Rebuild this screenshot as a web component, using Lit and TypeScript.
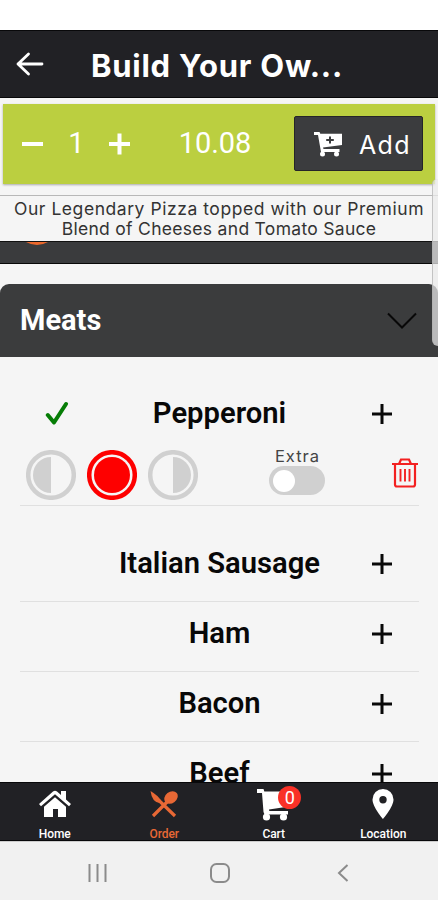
import { LitElement, html, css, svg } from "lit";
import { customElement, property } from "lit/decorators.js";

const cartShape = svg`
  <path d="M0 1h6.500l.8 2.500H32v15L12 21.500l.3 1.500H31v3.500H7.500L6.500 24 5 5H0z"/>
  <circle cx="9.500" cy="29" r="3.600"/><circle cx="26.500" cy="29" r="3.600"/>`;

const plus = html`<svg class="plus" width="22" height="22" viewBox="0 0 22 22">
  <path d="M11 1v20M1 11h20" fill="none" stroke="currentColor" stroke-width="3"/></svg>`;

@customElement("topping-row")
export class ToppingRow extends LitElement {
  @property() name = "";
  @property({ type: Boolean }) selected = false;

  static styles = css`
    :host { display: block; margin: 0 19px 0 20px; border-bottom: 1px solid #e0e0e0; box-sizing: border-box; height: 70px; }
    :host([selected]) { height: 149px; margin-bottom: 26px; padding-top: 25px; }
    .line { display: grid; grid-template-columns: 74px 1fr 74px; align-items: center; height: 63px; color: #080808; }
    .name { text-align: center; font: 600 29.200px/34px Roboto, sans-serif; white-space: nowrap; }
    svg { display: block; }
    .plus, .check { justify-self: center; }
    .plus { margin-top: 1px; }
    .options { display: flex; align-items: center; height: 60px; }
    .portion { margin: 0 5.500px; }
    .extra { margin: -8px 0 0 66px; width: 57px; text-align: center; font: 400 16.500px/20px Inter, sans-serif; color: #444; }
    .label { letter-spacing: 1px; }
    .toggle { width: 56px; height: 29px; border-radius: 15px; background: #d0d0d0; box-sizing: border-box; padding: 3.500px; }
    .knob { width: 22px; height: 22px; border-radius: 50%; background: #fff; }
    .trash { margin: -4px 1px 0 auto; }
  `;

  portion(kind: "left" | "whole" | "right") {
    const c = kind === "whole" ? "#fe0000" : "#d0d0d0";
    const fill = kind === "left" ? svg`<path d="M25 7a18 18 0 0 0 0 36z" fill=${c}/>`
      : kind === "right" ? svg`<path d="M25 7a18 18 0 0 1 0 36z" fill=${c}/>`
      : svg`<circle cx="25" cy="25" r="18" fill=${c}/>`;
    return html`<svg class="portion" width="50" height="50" viewBox="0 0 50 50">
      <circle cx="25" cy="25" r="22.800" fill="none" stroke=${c} stroke-width="4.500"/>${fill}</svg>`;
  }

  render() {
    return html`
      <div class="line">
        ${this.selected ? html`<svg class="check" width="24" height="25" viewBox="0 0 24 25">
          <path d="M2.800 14l6.200 7.500L21 3" fill="none" stroke="#067d06" stroke-width="4" stroke-linecap="round" stroke-linejoin="round"/></svg>` : html`<span></span>`}
        <div class="name">${this.name}</div>
        ${plus}
      </div>
      ${this.selected ? html`<div class="options">
        ${this.portion("left")}${this.portion("whole")}${this.portion("right")}
        <div class="extra"><div class="label">Extra</div><div class="toggle"><div class="knob"></div></div></div>
        <svg class="trash" width="26" height="30" viewBox="0 0 26 30" fill="none" stroke="#f32020" stroke-width="2.200">
          <path d="M0 6h26M7 6l2-4.500h8L19 6M3 6v20.500q0 2 2 2h16q2 0 2-2V6"/>
          <path d="M8.500 11v12.500M13 11v12.500M17.500 11v12.500" stroke-width="1.900"/></svg>
      </div>` : null}`;
  }
}

@customElement("app-root")
export class AppRoot extends LitElement {
  static styles = css`
    :host { display: flex; flex-direction: column; width: 438px; height: 900px; overflow: hidden; background: #f5f5f5; font-family: Roboto, sans-serif; position: relative; }
    * { box-sizing: border-box; }
    svg { display: block; flex: none; }
    .status { height: 30px; background: #fff; flex: none; }
    .header { height: 68px; flex: none; display: flex; align-items: center; background: #212125; border-top: 1px solid #08080a; border-bottom: 1px solid #08080a; color: #fff; padding-left: 16px; }
    .title { margin: 3px 0 0 47px; font: 700 31px/40px Inter, sans-serif; letter-spacing: .75px; white-space: nowrap; }
    .order { height: 80px; flex: none; margin: 5.500px 3px 0; background: #bbcf40; box-shadow: 0 1px 2px #aaa; color: #fff; display: flex; align-items: center; padding-left: 19px; }
    .qty { width: 65px; text-align: center; }
    .qty, .price { font-size: 29px; line-height: 36px; font-weight: 400; margin-bottom: 2px; }
    .price { margin-left: 47px; width: 74px; text-align: center; letter-spacing: -.1px; }
    .add { margin-left: auto; margin-right: 12px; width: 129px; height: 55px; background: #3b3c3e; border: 1px solid #252528; border-radius: 2px; display: flex; align-items: center; padding-left: 18px; gap: 16px; }
    .word { font: 400 25px/30px Inter, sans-serif; letter-spacing: 1.300px; margin-top: 3px; }
    .desc { flex: none; height: 46px; margin-top: 11px; border-top: 1px solid #b8b8b8; text-align: center; font: 400 17.500px/20.500px Inter, sans-serif; color: #333; white-space: nowrap; padding-top: 3px; }
    .one { letter-spacing: .55px; }
    .two { letter-spacing: .3px; }
    .strip { flex: none; height: 23px; background: #3a3b3d; border-top: 1px solid #111; border-bottom: 1px solid #080808; padding-left: 26px; overflow: hidden; }
    .section { flex: none; margin-top: 20px; height: 73px; background: #3b3c3d; border-radius: 9px 9px 0 0; color: #fff; display: flex; align-items: center; justify-content: space-between; padding: 0 21px 1px 20px; font: 700 29px/34px Roboto, sans-serif; }
    .list { flex: 1; min-height: 0; overflow: hidden; }
    .tabs { flex: none; height: 59px; background: #212125; border-top: 1px solid #08080a; border-bottom: 1px solid #08080a; display: grid; grid-template-columns: repeat(4, 1fr); color: #fff; }
    .tab { display: flex; flex-direction: column; align-items: center; padding-top: 3px; font: 500 12px/14px Roboto, sans-serif; letter-spacing: -.05px; }
    .icon { position: relative; height: 36px; display: flex; align-items: center; margin-bottom: 5px; }
    .active { color: #e86835; }
    .badge { position: absolute; left: 21px; top: 0; width: 23px; height: 23px; border-radius: 50%; background: #f93127; font: 400 18px/23px Roboto, sans-serif; text-align: center; }
    .system { flex: none; height: 59px; background: #f1f1f1; border-top: 1px solid #ccc; display: flex; align-items: center; padding: 3px 0 0 88px; }
    .home { margin: 0 107px 0 103px; }
    .scroll { position: absolute; right: 0; top: 179px; width: 6px; height: 167px; border-radius: 5px 0 0 6px; background: rgba(235, 235, 235, .72); border-left: 1px solid rgba(175, 175, 175, .7); }
  `;

  render() {
    return html`
      <div class="status"></div>
      <div class="header">
        <svg width="28" height="24" viewBox="0 0 28 24" fill="none" stroke="#fff" stroke-width="2.800" stroke-linecap="round" stroke-linejoin="round"><path d="M26 12H2M12.500 2L2 12l10.500 10"/></svg>
        <div class="title">Build Your Ow...</div>
      </div>
      <div class="order">
        <svg width="22" height="22" viewBox="0 0 22 22"><path d="M0 11h21" stroke="#fff" stroke-width="4"/></svg>
        <div class="qty">1</div>
        <svg width="22" height="22" viewBox="0 0 22 22"><path d="M0 11h21M10.500 .5v21" stroke="#fff" stroke-width="4"/></svg>
        <div class="price">10.08</div>
        <div class="add">
          <svg width="30" height="26" viewBox="0 0 30 26" fill="#fff">
            <path d="M1 1h5.500l.8 1.800H29V14L10 16.500l.5 1.500H26.500v3H8L5 4H1z"/>
            <circle cx="9.500" cy="23" r="2.500"/><circle cx="23.500" cy="23" r="2.500"/>
            <path d="M17 5.500v7M13.200 9h7.600" stroke="#3b3c3e" stroke-width="2"/></svg>
          <span class="word">Add</span>
        </div>
      </div>
      <div class="desc"><div class="one">Our Legendary Pizza topped with our Premium</div><div class="two">Blend of Cheeses and Tomato Sauce</div></div>
      <div class="strip"><svg width="22" height="3" viewBox="0 0 22 3"><path d="M0 0h22Q11 6 0 0" fill="#ec682c"/></svg></div>
      <div class="section"><span>Meats</span>
        <svg width="30" height="18" viewBox="0 0 30 18"><path d="M1 2.500L15 16.500 29 2.500" fill="none" stroke="#080808" stroke-width="2"/></svg>
      </div>
      <div class="list">
        <topping-row name="Pepperoni" selected></topping-row>
        ${["Italian Sausage", "Ham", "Bacon", "Beef"].map((n) => html`<topping-row name=${n}></topping-row>`)}
      </div>
      <div class="tabs">
        <div class="tab"><div class="icon"><svg width="32" height="28" viewBox="0 0 32 28" fill="#fff">
          <path d="M0 14L14 1.500q2-1.500 4 0l4 3.500V1h5v8.500l5 4.500-2 2.300L16 4.200 2 16.300z"/><path d="M5 16.800L16 7.200l11 9.600V27h-8v-8h-5v8H5z"/></svg></div>Home</div>
        <div class="tab active"><div class="icon"><svg width="28" height="28" viewBox="0 0 28 28" fill="#e86835">
          <path d="M.5 1Q8 5.500 11 10.500L9.500 13Q2 12 .5 1z"/><path d="M9 10.500L25 26M3 26l14-14" stroke="#e86835" stroke-width="3.200"/>
          <ellipse cx="21" cy="7.500" rx="7.300" ry="5.700" transform="rotate(-38 21 7.500)"/></svg></div>Order</div>
        <div class="tab"><div class="icon"><svg width="33" height="33" viewBox="0 0 33 33" fill="#fff">${cartShape}</svg><span class="badge">0</span></div>Cart</div>
        <div class="tab"><div class="icon"><svg width="22" height="30" viewBox="0 0 22 30"><path fill-rule="evenodd" fill="#fff" d="M11 0a10.500 10.500 0 0 1 10.500 10.500C21.500 18 11 30 11 30S.5 18 .5 10.500A10.500 10.500 0 0 1 11 0zm0 7a3.700 3.700 0 1 0 0 7.400A3.700 3.700 0 0 0 11 7z"/></svg></div>Location</div>
      </div>
      <div class="system">
        <svg width="19" height="18" viewBox="0 0 19 18"><path d="M1.500 0v18M9.500 0v18M17.500 0v18" stroke="#8b8b8b" stroke-width="2"/></svg>
        <svg class="home" width="20" height="20" viewBox="0 0 20 20"><rect x="1" y="1" width="18" height="18" rx="5.500" fill="none" stroke="#8b8b8b" stroke-width="2"/></svg>
        <svg width="12" height="18" viewBox="0 0 12 18"><path d="M10.500 1L2 9l8.500 8" fill="none" stroke="#8b8b8b" stroke-width="2"/></svg>
      </div>
      <div class="scroll"></div>`;
  }
}
